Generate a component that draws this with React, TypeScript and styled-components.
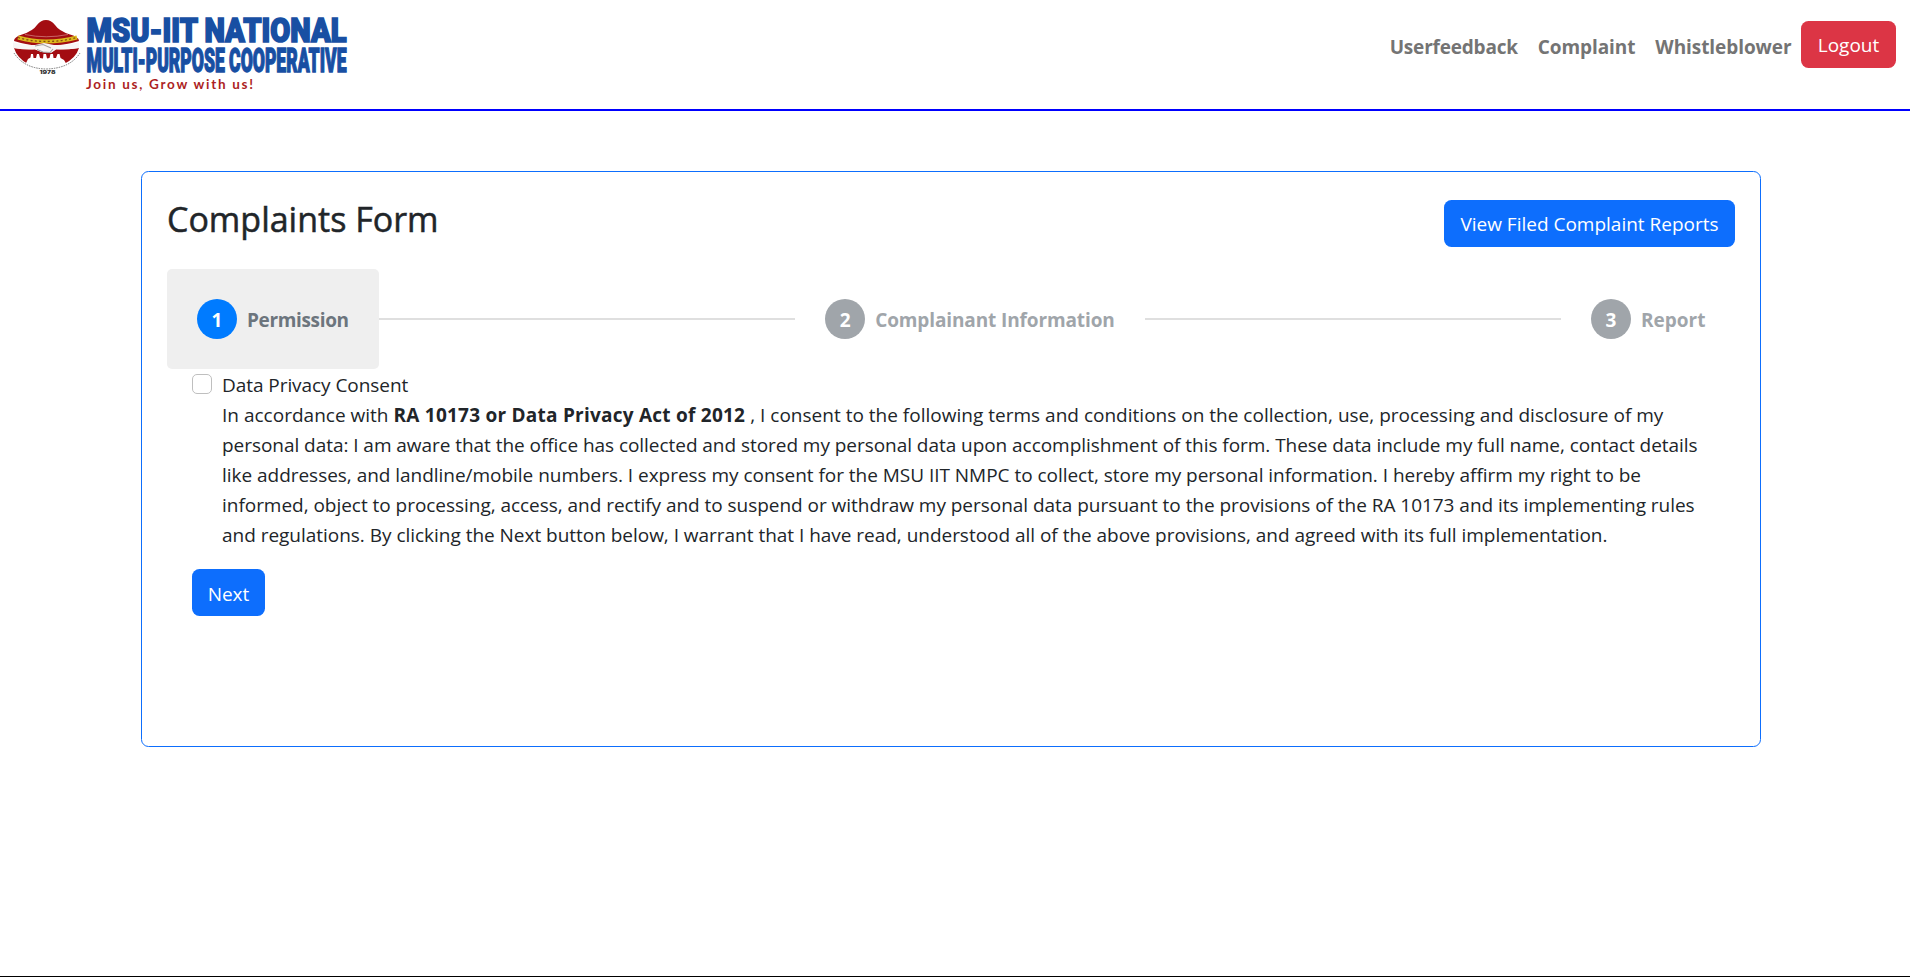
import React from "react";
import styled, { createGlobalStyle } from "styled-components";

const GlobalStyle = createGlobalStyle`
  *, *::before, *::after { box-sizing: border-box; }
  body {
    margin: 0;
    background: #fff;
    color: #212529;
    font-family: "Segoe UI", "Open Sans", "Noto Sans", sans-serif;
    font-size: 19px;
    line-height: 30px;
  }
`;

const Page = styled.div`
  display: flex;
  flex-direction: column;
  min-height: 977px;
  border-bottom: 1px solid #000;
`;

const Header = styled.header`
  display: flex;
  justify-content: space-between;
  align-items: flex-start;
  height: 111px;
  padding: 0 14px 0 10px;
  border-bottom: 2px solid #00f;
`;

const LogoSvg = styled.svg`
  display: block;
  overflow: visible;
`;

const Nav = styled.nav`
  display: flex;
  align-items: flex-start;
  padding-top: 21px;
`;

const NavLink = styled.a<{ $tracking?: number }>`
  display: block;
  padding: 11px 0 0;
  margin-right: 20px;
  color: #747474;
  font-weight: 700;
  white-space: nowrap;
  text-decoration: none;
  letter-spacing: ${(p) => p.$tracking ?? 0}px;

  &:last-of-type { margin-right: 9.5px; }
`;

const Button = styled.button<{ $width: number; $danger?: boolean; $drop?: number }>`
  width: ${(p) => p.$width}px;
  height: 47px;
  padding: ${(p) => p.$drop ?? 0}px 0 0;
  border: 0;
  border-radius: 7.5px;
  background: ${(p) => (p.$danger ? "#dc3545" : "#0d6efd")};
  color: #fff;
  font: inherit;
  white-space: nowrap;
`;

const Card = styled.main`
  width: 1620px;
  height: 576px;
  margin: 60px 0 0 141px;
  padding: 28px 25px;
  border: 1px solid #0d6efd;
  border-radius: 7.5px;
`;

const CardHead = styled.div`
  display: flex;
  justify-content: space-between;
  align-items: flex-start;
  height: 69px;
`;

const Title = styled.h3`
  margin: 0;
  font-size: 34px;
  font-weight: 500;
  line-height: 39px;
  -webkit-text-stroke: 0.5px currentColor;
`;

const Stepper = styled.div`
  display: flex;
  align-items: center;
`;

const StepBox = styled.div<{ $active?: boolean; $width: number }>`
  display: flex;
  align-items: center;
  width: ${(p) => p.$width}px;
  height: 100px;
  padding: 0 30px;
  border-radius: 5px;
  background: ${(p) => (p.$active ? "#efefef" : "transparent")};
  color: ${(p) => (p.$active ? "#6c757d" : "#a0a5aa")};
  font-weight: 700;
`;

const Circle = styled.span<{ $active?: boolean }>`
  flex: none;
  width: 40px;
  height: 40px;
  margin-right: 10px;
  padding-top: 6px;
  border-radius: 50%;
  background: ${(p) => (p.$active ? "#007bff" : "#a0a5aa")};
  color: #fff;
  text-align: center;
`;

const StepLabel = styled.span<{ $tracking: number }>`
  padding-top: 2px;
  white-space: nowrap;
  letter-spacing: ${(p) => p.$tracking}px;
`;

const Connector = styled.span`
  flex: 1;
  height: 2px;
  background: #dfdfdf;
`;

const Form = styled.form`
  padding: 1px 25px 0;
`;

const Consent = styled.div`
  display: grid;
  grid-template-columns: 20px 1fr;
  column-gap: 10px;
`;

const Checkbox = styled.input`
  appearance: none;
  width: 20px;
  height: 20px;
  margin: 4px 0 0;
  border: 1px solid #bfbfbf;
  border-radius: 5px;
  background: #fff;
`;

const ConsentLabel = styled.label`
  letter-spacing: -0.06px;
`;

const Terms = styled.div`
  grid-column: 2;
  margin-bottom: 19px;
`;

const Line = styled.span<{ $tracking?: number }>`
  display: block;
  white-space: nowrap;
  letter-spacing: ${(p) => p.$tracking ?? 0}px;
`;

const Act = styled.b`
  letter-spacing: 0.24px;
`;

const steps = [
  { label: "Permission", width: 212, tracking: -0.35 },
  { label: "Complainant Information", width: 349.6, tracking: -0.12 },
  { label: "Report", width: 174, tracking: 0 },
];

function Logo() {
  return (
    <LogoSvg width="345" height="100" viewBox="10 0 345 100" role="img" aria-label="MSU-IIT National Multi-Purpose Cooperative">
      <path d="M14 41 Q14 37 22 34.500 Q33 31 37 25 Q41 20 46 20 Q51 20 55 25 Q59 31 70 34.500 Q79 37 79 41 Q63 46 46 46 Q29 46 14 41 Z" fill="#a30d12" />
      <path d="M25 34.500 Q46 39 68 34.500" stroke="#d98a8a" strokeWidth="0.700" fill="none" />
      <path d="M18 37.500 Q32 41.500 46 41.500 Q62 41.500 77 37.500" stroke="#dcb81c" strokeWidth="4.200" fill="none" />
      <path d="M18 37.500 Q32 41.500 46 41.500 Q62 41.500 77 37.500" stroke="#8a4a10" strokeWidth="1.300" strokeDasharray="2 2.300" fill="none" />
      <path d="M14 48 Q27 50 35 49 L41 52 L52 52 L56 49 Q68 50 79 48 Q76 58 64 64 L28 64 Q17 58 14 48 Z" fill="#a30d12" />
      <path d="M13 42.500 Q24 45.500 35 45 L44 43 L54 45 Q67 45.500 79 42.500 L79 48 Q66 50 56 49.500 L51 53 L42 52 L35 49.500 Q25 50 13 48 Z" fill="#f8f5f5" />
      <path d="M35 46 L43 44.500 L51 48 M37 49.500 L43 52 L50 52.500 L53 49" stroke="#a5a1a1" strokeWidth="1.100" fill="none" />
      <path d="M25 65 L28 59 L30.500 57.500 L31 54 L33 54 L33.500 58 L36 58 L37 54 L39 54 L40 58 L43 58.500 L43.500 54 L46 54 L47 58.500 L49.500 58 L50.500 54 L53 54 L53.500 58 L56 58 L57.500 54 L59.500 54 L60.500 58 L64 60 L67 65 Q46 72 25 65 Z" fill="#fff" />
      <path d="M14 53 Q24 68.500 46 69 Q70 68.500 80 53" stroke="#666" strokeWidth="0.900" strokeDasharray="1.500 1" fill="none" />
      <text x="39.500" y="73.700" fontFamily="Inter, sans-serif" fontWeight="900" fontSize="4.800" textLength="16" lengthAdjust="spacingAndGlyphs" fill="#333">1978</text>
      <g fontFamily="Roboto, sans-serif" fontWeight="900" fill="#184fa3" stroke="#184fa3">
        <text x="86.500" y="42.300" fontSize="34" strokeWidth="1.700" textLength="260" lengthAdjust="spacingAndGlyphs">MSU-IIT NATIONAL</text>
        <text x="86.500" y="71.800" fontSize="32.500" strokeWidth="1.400" textLength="260" lengthAdjust="spacingAndGlyphs">MULTI-PURPOSE COOPERATIVE</text>
      </g>
      <text x="86" y="88.500" fontFamily="Lato, sans-serif" fontWeight="700" fontSize="13.500" textLength="167" fill="#ad1f24">Join us, Grow with us!</text>
    </LogoSvg>
  );
}

export default function App() {
  return (
    <>
      <GlobalStyle />
      <Page>
        <Header>
          <Logo />
          <Nav>
            <NavLink $tracking={-0.2}>Userfeedback</NavLink>
            <NavLink $tracking={-0.1}>Complaint</NavLink>
            <NavLink $tracking={-0.07}>Whistleblower</NavLink>
            <Button $width={95} $danger>Logout</Button>
          </Nav>
        </Header>
        <Card>
          <CardHead>
            <Title>Complaints Form</Title>
            <Button $width={291}>View Filed Complaint Reports</Button>
          </CardHead>
          <Stepper>
            {steps.map((step, i) => (
              <React.Fragment key={step.label}>
                {i > 0 && <Connector />}
                <StepBox $active={i === 0} $width={step.width}>
                  <Circle $active={i === 0}>{i + 1}</Circle>
                  <StepLabel $tracking={step.tracking}>{step.label}</StepLabel>
                </StepBox>
              </React.Fragment>
            ))}
          </Stepper>
          <Form>
            <Consent>
              <Checkbox type="checkbox" id="consent" />
              <ConsentLabel htmlFor="consent">Data Privacy Consent</ConsentLabel>
              <Terms>
                <Line $tracking={0.01}>In accordance with <Act>RA 10173 or Data Privacy Act of 2012</Act> , I consent to the following terms and conditions on the collection, use, processing and disclosure of my</Line>
                <Line $tracking={-0.047}>personal data: I am aware that the office has collected and stored my personal data upon accomplishment of this form. These data include my full name, contact details</Line>
                <Line $tracking={-0.03}>like addresses, and landline/mobile numbers. I express my consent for the MSU IIT NMPC to collect, store my personal information. I hereby affirm my right to be</Line>
                <Line $tracking={-0.034}>informed, object to processing, access, and rectify and to suspend or withdraw my personal data pursuant to the provisions of the RA 10173 and its implementing rules</Line>
                <Line $tracking={-0.025}>and regulations. By clicking the Next button below, I warrant that I have read, understood all of the above provisions, and agreed with its full implementation.</Line>
              </Terms>
            </Consent>
            <Button $width={73} $drop={2} type="button">Next</Button>
          </Form>
        </Card>
      </Page>
    </>
  );
}
